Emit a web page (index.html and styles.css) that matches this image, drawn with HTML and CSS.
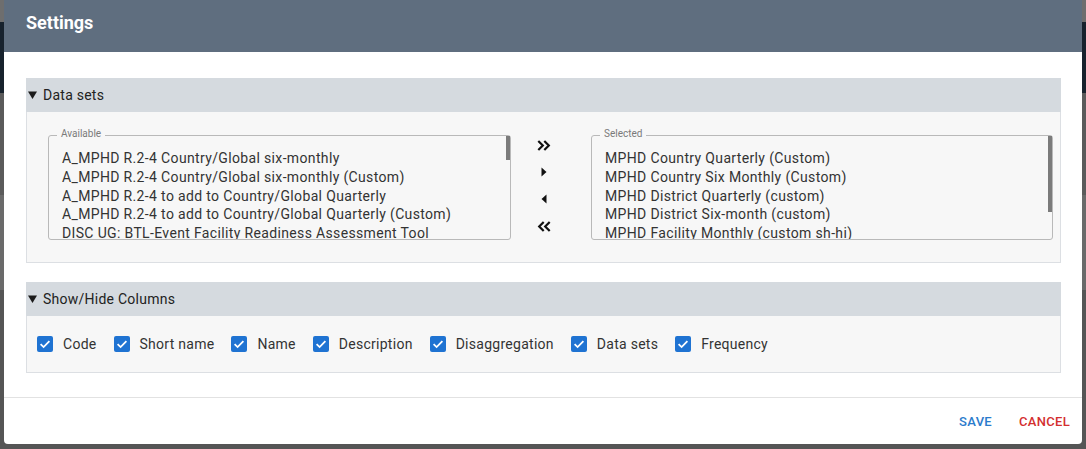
FILE: index.html
```html
<!DOCTYPE html>
<html lang="en">
<head>
<meta charset="utf-8">
<title>Settings</title>
<link rel="stylesheet" href="styles.css">
</head>
<body>
<div class="dialog">
  <div class="dlg-header"><h2 class="dlg-title">Settings</h2></div>
  <div class="dlg-body">
    <section class="panel">
      <div class="panel-head">
        <svg class="caret" width="9" height="8" viewBox="0 0 9 8"><path d="M0 0.5H9L4.5 8Z" fill="#1b1b1b"/></svg>
        <span>Data sets</span>
      </div>
      <div class="panel-body transfer">
        <div class="box">
          <span class="legend">Available</span>
          <div class="list">
            <div class="item">A_MPHD R.2-4 Country/Global six-monthly</div>
            <div class="item">A_MPHD R.2-4 Country/Global six-monthly (Custom)</div>
            <div class="item">A_MPHD R.2-4 to add to Country/Global Quarterly</div>
            <div class="item">A_MPHD R.2-4 to add to Country/Global Quarterly (Custom)</div>
            <div class="item">DISC UG: BTL-Event Facility Readiness Assessment Tool</div>
          </div>
          <div class="thumb thumb-short"></div>
        </div>
        <div class="arrows">
          <button class="arrow" type="button" aria-label="Select all">
            <svg width="14" height="11" viewBox="0 0 14 11"><path d="M1.3 1L5.8 5.5L1.3 10M7.3 1L11.8 5.5L7.3 10" fill="none" stroke="#111" stroke-width="2.2"/></svg>
          </button>
          <button class="arrow" type="button" aria-label="Select">
            <svg width="6" height="10" viewBox="0 0 6 10"><path d="M0.5 0.5L5.5 5L0.5 9.5Z" fill="#111"/></svg>
          </button>
          <button class="arrow" type="button" aria-label="Deselect">
            <svg width="6" height="10" viewBox="0 0 6 10"><path d="M5.5 0.5L0.5 5L5.5 9.5Z" fill="#111"/></svg>
          </button>
          <button class="arrow" type="button" aria-label="Deselect all">
            <svg width="14" height="11" viewBox="0 0 14 11"><path d="M6.7 1L2.2 5.5L6.7 10M12.7 1L8.2 5.5L12.7 10" fill="none" stroke="#111" stroke-width="2.2"/></svg>
          </button>
        </div>
        <div class="box box-right">
          <span class="legend">Selected</span>
          <div class="list">
            <div class="item">MPHD Country Quarterly (Custom)</div>
            <div class="item">MPHD Country Six Monthly (Custom)</div>
            <div class="item">MPHD District Quarterly (custom)</div>
            <div class="item">MPHD District Six-month (custom)</div>
            <div class="item">MPHD Facility Monthly (custom sh-hi)</div>
          </div>
          <div class="thumb thumb-long"></div>
        </div>
      </div>
    </section>

    <section class="panel panel-cols">
      <div class="panel-head">
        <svg class="caret" width="9" height="8" viewBox="0 0 9 8"><path d="M0 0.5H9L4.5 8Z" fill="#1b1b1b"/></svg>
        <span>Show/Hide Columns</span>
      </div>
      <div class="panel-body checks">
        <label class="check"><span class="cb"><svg width="16" height="16" viewBox="0 0 16 16"><rect width="16" height="16" rx="2" fill="#1f73d2"/><path d="M3.6 8.2L6.6 11.1L12.4 5.2" fill="none" stroke="#fff" stroke-width="1.8"/></svg></span>Code</label>
        <label class="check"><span class="cb"><svg width="16" height="16" viewBox="0 0 16 16"><rect width="16" height="16" rx="2" fill="#1f73d2"/><path d="M3.6 8.2L6.6 11.1L12.4 5.2" fill="none" stroke="#fff" stroke-width="1.8"/></svg></span>Short name</label>
        <label class="check"><span class="cb"><svg width="16" height="16" viewBox="0 0 16 16"><rect width="16" height="16" rx="2" fill="#1f73d2"/><path d="M3.6 8.2L6.6 11.1L12.4 5.2" fill="none" stroke="#fff" stroke-width="1.8"/></svg></span>Name</label>
        <label class="check"><span class="cb"><svg width="16" height="16" viewBox="0 0 16 16"><rect width="16" height="16" rx="2" fill="#1f73d2"/><path d="M3.6 8.2L6.6 11.1L12.4 5.2" fill="none" stroke="#fff" stroke-width="1.8"/></svg></span>Description</label>
        <label class="check"><span class="cb"><svg width="16" height="16" viewBox="0 0 16 16"><rect width="16" height="16" rx="2" fill="#1f73d2"/><path d="M3.6 8.2L6.6 11.1L12.4 5.2" fill="none" stroke="#fff" stroke-width="1.8"/></svg></span>Disaggregation</label>
        <label class="check"><span class="cb"><svg width="16" height="16" viewBox="0 0 16 16"><rect width="16" height="16" rx="2" fill="#1f73d2"/><path d="M3.6 8.2L6.6 11.1L12.4 5.2" fill="none" stroke="#fff" stroke-width="1.8"/></svg></span>Data sets</label>
        <label class="check"><span class="cb"><svg width="16" height="16" viewBox="0 0 16 16"><rect width="16" height="16" rx="2" fill="#1f73d2"/><path d="M3.6 8.2L6.6 11.1L12.4 5.2" fill="none" stroke="#fff" stroke-width="1.8"/></svg></span>Frequency</label>
      </div>
    </section>
  </div>
  <div class="dlg-footer">
    <button class="btn btn-save" type="button">SAVE</button>
    <button class="btn btn-cancel" type="button">CANCEL</button>
  </div>
</div>
</body>
</html>
```

FILE: styles.css
```css
* { box-sizing: border-box; }

html, body {
  margin: 0;
  height: 100%;
}

body {
  font-family: Roboto, "Liberation Sans", Arial, sans-serif;
  background:
    linear-gradient(to bottom, #6e6e6e 0, #6e6e6e 22px, #17222d 22px, #17222d 93px, #5b5b5b 93px, #5b5b5b 195px, #6a6a6a 195px, #6a6a6a 290px, #555 290px);
  overflow: hidden;
}

.dialog {
  margin-left: 4px;
  width: 1078px;
  height: 444px;
  background: #fff;
  border-radius: 0 0 4px 4px;
  display: flex;
  flex-direction: column;
}

.dlg-header {
  height: 52px;
  flex: none;
  background: #5f6e7f;
  padding: 11px 22px 0;
}

.dlg-title {
  margin: 0;
  font-size: 18px;
  line-height: 24px;
  font-weight: 700;
  color: #fff;
}

.dlg-body {
  flex: 1;
  padding: 26px 21px 24px 22px;
  border-bottom: 1px solid #e2e2e2;
}

.panel {
  border: 1px solid #dcdfe3;
  border-top: 0;
}

.panel-cols {
  margin-top: 19px;
}

.panel-head {
  height: 34px;
  background: #d5dadf;
  display: flex;
  align-items: center;
  padding-left: 1px;
  font-size: 14px;
  letter-spacing: 0.25px;
  color: #222;
  margin: 0 -1px;
}

.caret {
  margin-right: 6px;
  margin-left: 1px;
}

.panel-body {
  background: #f7f7f7;
}

.transfer {
  display: flex;
  align-items: flex-start;
  padding: 23px 7px 22px 21px;
}

.box {
  position: relative;
  width: 463px;
  height: 105px;
  border: 1px solid #b9b9b9;
  border-radius: 3px;
}

.box-right {
  width: 462px;
}

.legend {
  position: absolute;
  top: -8px;
  left: 8px;
  padding: 0 4px;
  font-size: 10px;
  line-height: 12px;
  color: #7a7a7a;
  background: #f7f7f7;
}

.list {
  height: 100%;
  overflow: hidden;
  padding: 13px 0 0 13px;
}

.item {
  font-size: 14px;
  line-height: 18.75px;
  letter-spacing: 0.35px;
  color: #333;
  white-space: nowrap;
}

.thumb {
  position: absolute;
  top: 0;
  right: 0;
  width: 4px;
  background: #7b7b7b;
}

.thumb-short { height: 24px; }
.thumb-long { height: 76px; }

.arrows {
  width: 80px;
  flex: none;
  display: flex;
  flex-direction: column;
  gap: 7px;
  padding-right: 14px;
}

.arrow {
  height: 20px;
  border: 0;
  background: transparent;
  padding: 0;
  display: flex;
  align-items: center;
  justify-content: center;
}

.checks {
  height: 56px;
  display: flex;
  align-items: center;
  gap: 17px;
  padding-left: 10px;
}

.check {
  display: flex;
  align-items: center;
  font-size: 14px;
  letter-spacing: 0.27px;
  color: #333;
}

.cb {
  display: flex;
  margin-right: 10px;
}

.dlg-footer {
  height: 46px;
  flex: none;
  display: flex;
  justify-content: flex-end;
  align-items: center;
  gap: 11px;
  padding-right: 4px;
}

.btn {
  border: 0;
  background: transparent;
  font-family: Roboto, "Liberation Sans", Arial, sans-serif;
  font-size: 13px;
  font-weight: 500;
  padding: 6px 8px;
  letter-spacing: 0.3px;
}

.btn-save { color: #2b7bcc; }
.btn-cancel { color: #d32f2f; }
```
